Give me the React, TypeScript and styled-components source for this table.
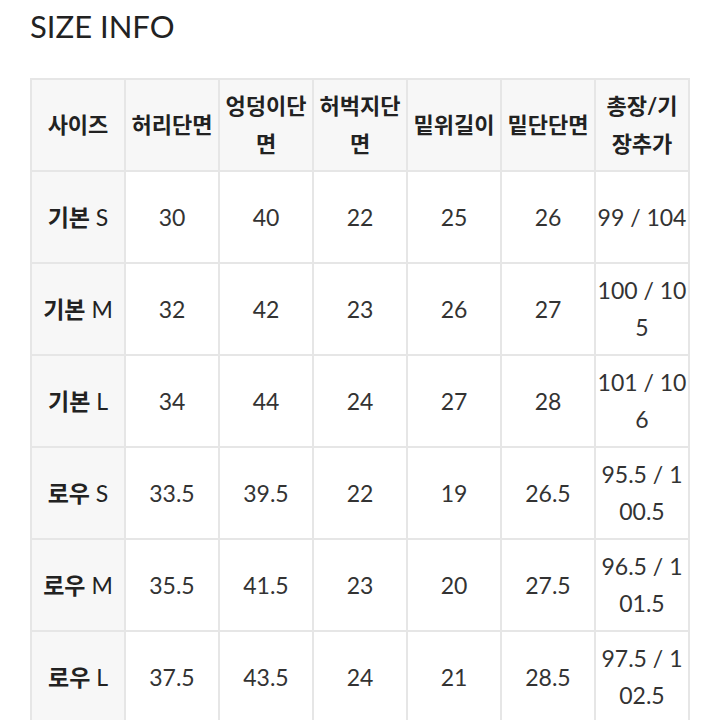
import React from 'react';
import styled, { createGlobalStyle } from 'styled-components';

const HEADERS = ['사이즈', '허리단면', '엉덩이단면', '허벅지단면', '밑위길이', '밑단단면', '총장/기장추가'];

const ROWS = [
  ['기본', 'S', '30', '40', '22', '25', '26', '99 / 104'],
  ['기본', 'M', '32', '42', '23', '26', '27', '100 / 105'],
  ['기본', 'L', '34', '44', '24', '27', '28', '101 / 106'],
  ['로우', 'S', '33.5', '39.5', '22', '19', '26.5', '95.5 / 100.5'],
  ['로우', 'M', '35.5', '41.5', '23', '20', '27.5', '96.5 / 101.5'],
  ['로우', 'L', '37.5', '43.5', '24', '21', '28.5', '97.5 / 102.5'],
];

const GlobalStyle = createGlobalStyle`
  html, body {
    margin: 0;
    padding: 0;
    background: #fff;
  }
  body {
    font-family: Lato, "Noto Sans CJK KR", sans-serif;
    color: #222;
  }
`;

export default function App() {
  return (
    <>
      <GlobalStyle />
      <Page>
        <Title>SIZE INFO</Title>
        <SizeTable>
          <thead>
            <tr>
              {HEADERS.map((h) => (
                <HeadCell key={h}>{h}</HeadCell>
              ))}
            </tr>
          </thead>
          <tbody>
            {ROWS.map(([fit, size, ...values]) => (
              <tr key={fit + size}>
                <LabelCell>
                  <FitName>{fit}</FitName> {size}
                </LabelCell>
                {values.map((v, i) => (
                  <Cell key={i}>{v}</Cell>
                ))}
              </tr>
            ))}
          </tbody>
        </SizeTable>
      </Page>
    </>
  );
}

const Page = styled.div`
  padding: 8px 30px 0;
  height: 720px;
  overflow: hidden;
  box-sizing: border-box;
`;

const Title = styled.h1`
  margin: 0 0 34px;
  font-family: Lato, sans-serif;
  font-weight: 400;
  font-size: 31px;
  line-height: 36px;
  color: #222;
`;

const SizeTable = styled.table`
  width: 660px;
  table-layout: fixed;
  border-collapse: separate;
  border-spacing: 0;
  border: 1px solid #e6e6e6;
`;

const Cell = styled.td`
  height: 92px;
  box-sizing: border-box;
  padding: 0 1px;
  border: 1px solid #e6e6e6;
  text-align: center;
  vertical-align: middle;
  font-family: Lato, "Noto Sans CJK KR", sans-serif;
  font-size: 23px;
  line-height: 37px;
  color: #333;
  word-break: break-all;
  background: #fff;
`;

const LabelCell = styled(Cell)`
  background: #f7f7f7;
  color: #222;
`;

const FitName = styled.span`
  font-weight: 700;
`;

const HeadCell = styled.th`
  height: 92px;
  box-sizing: border-box;
  padding: 0 1px;
  border: 1px solid #e6e6e6;
  text-align: center;
  vertical-align: middle;
  font-family: Lato, "Noto Sans CJK KR", sans-serif;
  font-size: 22px;
  font-weight: 700;
  line-height: 38px;
  color: #222;
  word-break: break-all;
  background: #f7f7f7;
`;
